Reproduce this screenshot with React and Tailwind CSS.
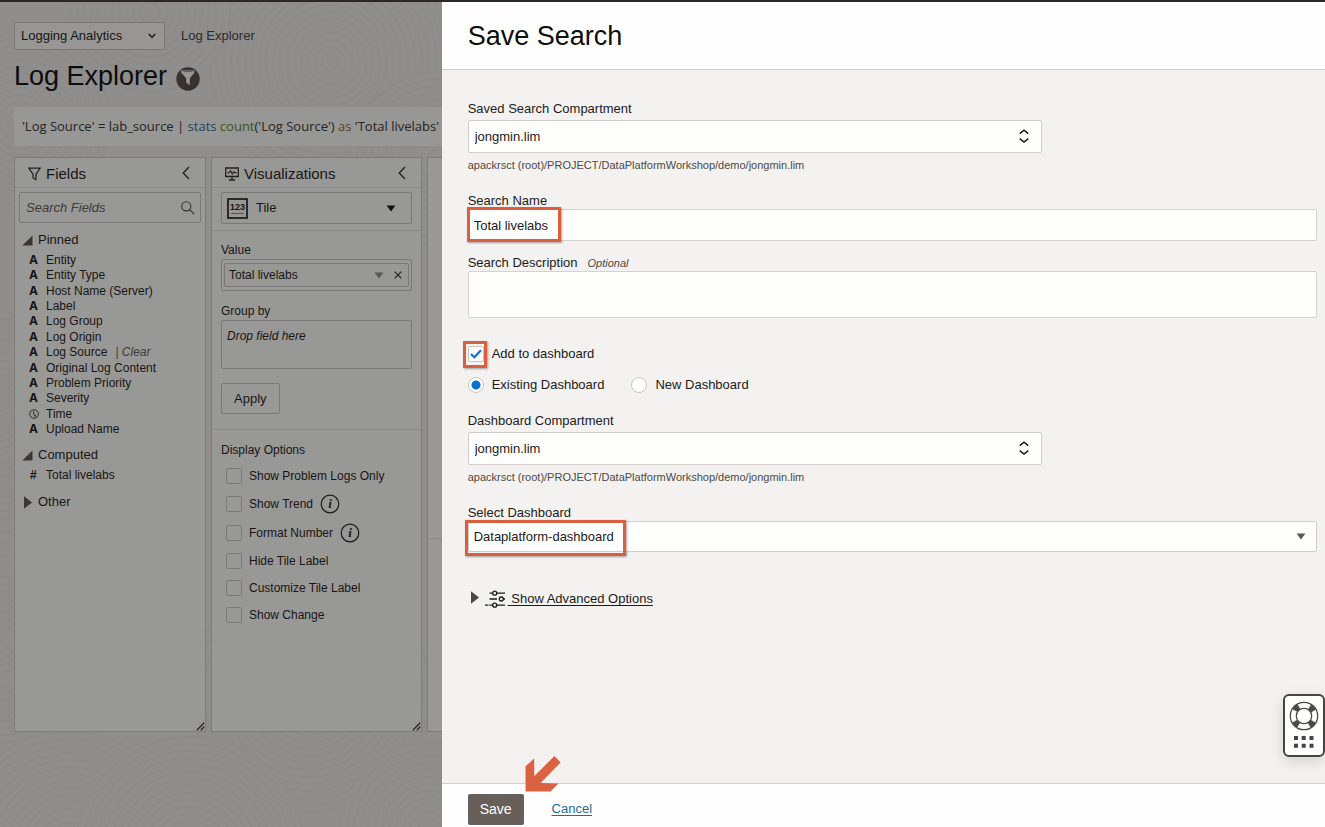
import React from 'react';

const PINNED = [
  'Entity',
  'Entity Type',
  'Host Name (Server)',
  'Label',
  'Log Group',
  'Log Origin',
  'Log Source',
  'Original Log Content',
  'Problem Priority',
  'Severity',
  'Time',
  'Upload Name',
];

const DISPLAY_OPTIONS = [
  { label: 'Show Problem Logs Only' },
  { label: 'Show Trend', info: true },
  { label: 'Format Number', info: true },
  { label: 'Hide Tile Label' },
  { label: 'Customize Tile Label' },
  { label: 'Show Change' },
];

const COMPARTMENT_PATH = 'apackrsct (root)/PROJECT/DataPlatformWorkshop/demo/jongmin.lim';

const RIPPLES = [
  [20, 120, 90], [330, 60, 120], [150, 10, 80], [440, 160, 90],
  [0, 420, 110], [0, 640, 100], [310, 690, 120], [70, 850, 120],
  [430, 830, 90], [190, 850, 115],
];

function Ripples() {
  return (
    <svg className="absolute inset-0 h-full w-full" aria-hidden="true">
      {RIPPLES.map(([cx, cy, max], i) => (
        <g key={i} fill="#8f8e8d" stroke="#8c8b8b" strokeWidth="2">
          {Array.from({ length: Math.floor(max / 7) }, (_, k) => (
            <circle key={k} cx={cx} cy={cy} r={max - k * 7} />
          ))}
        </g>
      ))}
    </svg>
  );
}

function FunnelBadge() {
  return (
    <svg width="24" height="24" viewBox="0 0 24 24" aria-hidden="true">
      <circle cx="12" cy="12" r="11.7" fill="#38322f" />
      <path d="M5.2 3.5h13.2v2.2l-4.6 5.6v6.9l-3.6-2.6v-4.3L5.2 5.700z" fill="#979695" />
      <path d="M7.300 4.600h9.200" stroke="#5c5856" strokeWidth="1" />
    </svg>
  );
}

function FunnelIcon() {
  return (
    <svg width="13" height="14" viewBox="0 0 13 14" fill="none" stroke="#262320" strokeWidth="1.3" aria-hidden="true">
      <path d="M.9 1.200h11.200L7.900 7.400v5.300L5.100 11V7.400z" />
    </svg>
  );
}

function MonitorIcon() {
  return (
    <svg width="14" height="14" viewBox="0 0 14 14" fill="none" stroke="#262320" strokeWidth="1.3" aria-hidden="true">
      <path d="M.7 1h12.600v8.500H.7zM7 9.500v3.300M3.800 13h6.400" />
      <path d="M2.500 5.600h1.700L5.600 3.700l1.700 3.500 1.500-2.600.8 1h1.900" strokeWidth="1.1" />
    </svg>
  );
}

function ChevronLeft() {
  return (
    <svg width="8" height="14" viewBox="0 0 8 14" fill="none" stroke="#201d1b" strokeWidth="1.3" aria-hidden="true">
      <path d="M7 1L1.200 7 7 13" />
    </svg>
  );
}

function TileIcon() {
  return (
    <svg width="21" height="21" viewBox="0 0 21 21" aria-hidden="true">
      <rect x="1" y="1" width="19" height="19" fill="none" stroke="#11100f" strokeWidth="1.600" />
      <text x="10.500" y="12" textAnchor="middle" fontSize="9" fontWeight="700" fill="#171514" fontFamily="Liberation Sans, sans-serif">123</text>
      <path d="M4 15.500h13" stroke="#5b5856" strokeWidth="1.200" />
    </svg>
  );
}

function InfoIcon() {
  return (
    <svg width="20" height="20" viewBox="0 0 20 20" aria-hidden="true">
      <circle cx="10" cy="10" r="8.800" fill="none" stroke="#1d1a18" strokeWidth="1.200" />
      <text x="10" y="14" textAnchor="middle" fontSize="13" fontStyle="italic" fontWeight="700" fill="#1d1a18" fontFamily="Liberation Serif, serif">i</text>
    </svg>
  );
}

function Grip() {
  return (
    <svg width="9" height="9" viewBox="0 0 9 9" className="absolute right-0 bottom-0" stroke="#262320" strokeWidth="1.300" aria-hidden="true">
      <path d="M.8 8.200L8.200.8M4.800 8.200l3.400-3.400" />
    </svg>
  );
}

function ExpandedMark() {
  return (
    <svg width="11" height="11" viewBox="0 0 11 11" fill="#3c3734" aria-hidden="true">
      <path d="M10.500.5v10H.3z" />
    </svg>
  );
}

function CollapsedMark({ fill }) {
  return (
    <svg width="8" height="13" viewBox="0 0 8 13" fill={fill} aria-hidden="true">
      <path d="M0 .3L8 6.500 0 12.700z" />
    </svg>
  );
}

function DownMark({ fill }) {
  return (
    <svg width="10" height="7" viewBox="0 0 10 7" fill={fill} aria-hidden="true">
      <path d="M.6.5h8.800L5 6.500z" />
    </svg>
  );
}

function ClockIcon() {
  return (
    <svg width="10" height="10" viewBox="0 0 10 10" fill="none" stroke="#262320" strokeWidth="0.900" aria-hidden="true">
      <circle cx="5" cy="5" r="4.300" />
      <path d="M4.600 2v3.300L6.700 7.600M6.200 5.500v2.300" />
    </svg>
  );
}

function Panel({ className, children }) {
  return (
    <section className={`relative flex shrink-0 flex-col border border-[#7e7c7a] bg-[#989896] ${className}`}>
      {children}
    </section>
  );
}

function PanelHeader({ icon, title }) {
  return (
    <div className="flex h-[30px] items-center border-b border-[#8b8988] pr-[15px] pl-[13px]">
      <span className="pt-[3px]">{icon}</span>
      <h2 className="ml-[5px] flex-1 pt-[3px] text-[15px] leading-5">{title}</h2>
      <button type="button" aria-label={`Collapse ${title}`}>
        <ChevronLeft />
      </button>
    </div>
  );
}

function FieldsPanel() {
  return (
    <Panel className="w-48">
      <PanelHeader icon={<FunnelIcon />} title="Fields" />
      <div className="px-1 pt-1">
        <div className="flex h-[31px] items-center rounded-xs border border-[#7b7977] pr-[5px] pl-[6px]">
          <input
            type="search"
            aria-label="Search Fields"
            placeholder="Search Fields"
            className="min-w-0 flex-1 bg-transparent text-[13px] italic outline-none placeholder:text-[#3d3a37]"
          />
          <svg width="14" height="14" viewBox="0 0 14 14" fill="none" stroke="#33302e" strokeWidth="1.100" aria-hidden="true">
            <circle cx="5.300" cy="5.300" r="4.600" />
            <path d="M8.700 8.700l4.700 4.700" />
          </svg>
        </div>
      </div>
      <h3 className="mt-2 ml-[7px] flex h-[18px] items-center gap-[5px] text-[13px]">
        <ExpandedMark />
        Pinned
      </h3>
      <ul className="mt-[3px] ml-[14px] grid h-[185px] auto-rows-fr text-[12px]">
        {PINNED.map((name) => (
          <li key={name} className="flex items-center">
            <span className="flex w-[17px]">
              {name === 'Time' ? <ClockIcon /> : <span className="font-['Inter',sans-serif] font-bold">A</span>}
            </span>
            {name}
            {name === 'Log Source' && <span className="ml-2 text-[#3f3c39]">| <i>Clear</i></span>}
          </li>
        ))}
      </ul>
      <h3 className="mt-[9px] ml-[7px] flex h-[18px] items-center gap-[5px] text-[13px]">
        <ExpandedMark />
        Computed
      </h3>
      <div className="mt-[3px] ml-[15px] flex h-4 items-center text-[12px]">
        <span className="w-4 font-bold">#</span>
        Total livelabs
      </div>
      <h3 className="mt-[10px] ml-[9px] flex h-[18px] items-center gap-[6px] text-[13px]">
        <CollapsedMark fill="#3c3734" />
        Other
      </h3>
      <Grip />
    </Panel>
  );
}

function VisualizationsPanel() {
  return (
    <Panel className="w-[211px]">
      <PanelHeader icon={<MonitorIcon />} title="Visualizations" />
      <div className="border-b border-[#8b8988] px-[9px] pt-1 pb-[6px]">
        <button type="button" className="flex h-8 w-full items-center rounded-xs border border-[#7b7977] pr-[15px] pl-[5px] text-[13px]">
          <TileIcon />
          <span className="ml-2 flex-1 text-left">Tile</span>
          <DownMark fill="#11100f" />
        </button>
      </div>
      <div className="border-b border-[#8b8988] px-[9px] pt-[11px] pb-[15px] text-[12px]">
        <div className="leading-4">Value</div>
        <div className="mt-px rounded-xs border border-[#7b7977] px-[2px] py-[3px]">
          <div className="flex h-6 items-center rounded-xs border border-[#7b7977] pr-[6px] pl-1">
            <span className="flex-1">Total livelabs</span>
            <DownMark fill="#5a5755" />
            <button type="button" aria-label="Remove" className="ml-[10px]">
              <svg width="8" height="8" viewBox="0 0 8 8" stroke="#262320" strokeWidth="1.200" aria-hidden="true">
                <path d="M.7.7l6.600 6.600M7.300.7L.7 7.300" />
              </svg>
            </button>
          </div>
        </div>
        <div className="mt-3 leading-4">Group by</div>
        <div className="mt-px h-[49px] rounded-xs border border-[#7b7977] px-[5px] pt-[7px] leading-4 italic">Drop field here</div>
        <button type="button" className="mt-[14px] block h-[31px] rounded-xs border border-[#7b7977] px-3 text-[13px]">Apply</button>
      </div>
      <fieldset className="px-[9px] pt-3 text-[12px]">
        <legend className="float-left w-full leading-4">Display Options</legend>
        <div className="clear-both flex flex-col pt-1">
          {DISPLAY_OPTIONS.map(({ label, info }) => (
            <div key={label} className={info ? 'flex h-[29px] items-center' : 'flex h-[27px] items-center'}>
              <label className="flex items-center">
                <input type="checkbox" className="ml-[5px] h-4 w-4 appearance-none rounded-xs border border-[#7b7977]" />
                <span className="ml-[7px]">{label}</span>
              </label>
              {info && (
                <button type="button" aria-label={`About ${label}`} className="ml-[7px]">
                  <InfoIcon />
                </button>
              )}
            </div>
          ))}
        </div>
      </fieldset>
      <Grip />
    </Panel>
  );
}

function Explorer() {
  return (
    <main className="relative w-1/3 shrink-0 overflow-hidden bg-[#8f8e8d] text-[#181614]">
      <Ripples />
      <div className="relative flex flex-col pt-5 pl-[14px]">
        <div className="flex items-center">
          <div className="relative">
            <select aria-label="Service" className="h-7 w-[151px] appearance-none rounded-xs border border-[#7b7977] bg-[#979695] pl-[6px] text-[13px]">
              <option>Logging Analytics</option>
            </select>
            <svg width="8" height="6" viewBox="0 0 8 6" className="pointer-events-none absolute top-[11px] right-[9px]" fill="none" stroke="#181614" strokeWidth="1.400" aria-hidden="true">
              <path d="M.8 1L4 4.300 7.200 1" />
            </svg>
          </div>
          <a href="#log-explorer" className="ml-4 text-[13px] text-[#2e2b29]">Log Explorer</a>
        </div>
        <h1 className="mt-2 flex h-9 items-center gap-[9px] text-[27px] leading-9 text-[#0d0c0b]">
          Log Explorer
          <span className="pt-[5px]"><FunnelBadge /></span>
        </h1>
        <div className="mt-[13px] flex h-[39px] items-center bg-[#979796] pl-2 font-['Open_Sans',sans-serif] text-[13px] whitespace-pre text-[#262321]">
          <span>
            {"'Log Source' = lab_source | "}
            <span className="text-[#1f4459]">stats</span> <span className="text-[#3d5326]">count</span>
            {"('Log Source') "}
            <span className="text-[#5d4326]">as</span>
            {" 'Total livelabs'"}
          </span>
        </div>
        <div className="mt-[11px] flex h-[575px] gap-[5px]">
          <FieldsPanel />
          <VisualizationsPanel />
          <Panel className="w-[600px]">
            <div className="h-[381px] border-b border-[#8b8988]" />
          </Panel>
        </div>
      </div>
    </main>
  );
}

function Highlight({ className }) {
  return <span className={`pointer-events-none absolute border-3 border-[#d95f3f] shadow-[1px_1px_2px_#00000059] ${className}`} />;
}

function CompartmentField({ id, label }) {
  return (
    <div>
      <label htmlFor={id} className="block leading-4">{label}</label>
      <div className="relative mt-[3px] w-[574px] max-w-full">
        <select id={id} className="h-[33px] w-full appearance-none rounded-xs border border-[#d0cdcb] bg-[#fefefd] px-[6px] pt-px">
          <option>jongmin.lim</option>
        </select>
        <svg width="10" height="14" viewBox="0 0 10 14" className="pointer-events-none absolute top-[9px] right-[13px]" fill="none" stroke="#161513" strokeWidth="1.400" aria-hidden="true">
          <path d="M.7 4.600L5 1.200l4.300 3.400M.7 9.600L5 13l4.300-3.400" />
        </svg>
      </div>
      <p className="mt-1 text-[11px] leading-4 text-[#4c4946]">{COMPARTMENT_PATH}</p>
    </div>
  );
}

function HelpWidget() {
  return (
    <button
      type="button"
      aria-label="Help"
      className="fixed top-[694px] right-0 flex h-[63px] w-[42px] flex-col items-center rounded-md border-2 border-[#454543] bg-[#fefefe] pt-[5px] shadow-[0_4px_14px_#00000022]"
    >
      <svg width="30" height="50" viewBox="0 0 30 50" aria-hidden="true">
        <circle cx="15" cy="15" r="10.700" fill="none" stroke="#4b4b49" strokeWidth="6" strokeDasharray="5.600 11.208" strokeDashoffset="-5.600" />
        <circle cx="15" cy="15" r="13.700" fill="none" stroke="#4b4b49" strokeWidth="1.300" />
        <circle cx="15" cy="15" r="7.700" fill="none" stroke="#4b4b49" strokeWidth="1.300" />
        <g fill="#454543">
          <path d="M5 35h4v4H5zM12.700 35h4v4h-4zM20.500 35h4v4h-4zM5 42.700h4v4H5zM12.700 42.700h4v4h-4zM20.500 42.700h4v4h-4z" />
        </g>
      </svg>
    </button>
  );
}

function SaveSearchDrawer() {
  return (
    <aside className="flex min-w-0 flex-1 flex-col bg-[#f3f2f1] text-[13px] text-[#1d1b19]">
      <header className="flex h-[68px] shrink-0 items-center border-b border-[#d0cecc] bg-[#fefefe] px-[26px]">
        <h1 className="text-[27px] leading-9 text-[#0e0d0c]">Save Search</h1>
      </header>
      <form className="flex-1 pt-[31px] pr-2 pl-[26px]">
        <CompartmentField id="search-compartment" label="Saved Search Compartment" />
        <label htmlFor="search-name" className="mt-5 block leading-4">Search Name</label>
        <div className="relative">
          <input
            id="search-name"
            type="text"
            defaultValue="Total livelabs"
            className="block h-8 w-full rounded-xs border border-[#d5d3d1] bg-[#fefefd] px-[5px]"
          />
          <Highlight className="-top-[2px] -left-px h-[35px] w-[94px]" />
        </div>
        <label htmlFor="search-description" className="mt-[14px] flex items-center gap-[10px] leading-4">
          Search Description
          <i className="text-[11px] text-[#4c4946]">Optional</i>
        </label>
        <textarea id="search-description" className="block h-[47px] w-full resize-none rounded-xs border border-[#d5d3d1] bg-[#fefefd] px-[5px]" />
        <div className="mt-[26px] flex h-5 items-center">
          <label className="flex items-center gap-2">
            <span className="relative flex h-4 w-4">
              <input type="checkbox" defaultChecked className="h-4 w-4 appearance-none rounded-xs border border-[#c8c6c4] bg-white" />
              <svg width="12" height="10" viewBox="0 0 12 10" className="pointer-events-none absolute top-[3px] left-[2px]" fill="none" stroke="#0572ce" strokeWidth="2.200" aria-hidden="true">
                <path d="M1 5l3.400 3.300L11 1.200" />
              </svg>
              <Highlight className="-top-[5px] -left-[5px] h-[27px] w-6" />
            </span>
            Add to dashboard
          </label>
        </div>
        <div className="mt-[11px] flex h-5 items-center gap-[27px]">
          <label className="flex items-center gap-2">
            <input
              type="radio"
              name="dashboard"
              defaultChecked
              className="h-4 w-4 appearance-none rounded-full border border-[#c8c6c4] bg-[radial-gradient(circle,#0572ce_4px,#ffffff_5px)]"
            />
            Existing Dashboard
          </label>
          <label className="flex items-center gap-2">
            <input type="radio" name="dashboard" className="h-4 w-4 appearance-none rounded-full border border-[#c8c6c4] bg-white" />
            New Dashboard
          </label>
        </div>
        <div className="pt-[18px]">
          <CompartmentField id="dashboard-compartment" label="Dashboard Compartment" />
        </div>
        <label htmlFor="dashboard-select" className="mt-5 block leading-4">Select Dashboard</label>
        <div className="relative">
          <select id="dashboard-select" className="block h-[31px] w-full appearance-none rounded-xs border border-[#d0cdcb] bg-[#fefefd] px-[5px] pt-px">
            <option>Dataplatform-dashboard</option>
          </select>
          <span className="pointer-events-none absolute top-3 right-[11px]"><DownMark fill="#5a5755" /></span>
          <Highlight className="-top-[1px] -left-[3px] h-9 w-[161px]" />
        </div>
        <div className="mt-[37px] flex h-5 items-center pl-[3px]">
          <span className="pb-1"><CollapsedMark fill="#4b4744" /></span>
          <a href="#advanced" className="ml-[6px] flex items-center">
            <svg width="22" height="18" viewBox="0 0 22 18" fill="none" stroke="#1d1b19" strokeWidth="1.300" aria-hidden="true">
              <path d="M4.500 3.200h3M12 3.200h8M4.500 9h7.500M18.500 9H20M0 15.200h3.500M4.500 15.200h3M12 15.200h8" />
              <circle cx="9.700" cy="3.200" r="2" />
              <circle cx="16.300" cy="9" r="2" />
              <circle cx="9.700" cy="15.200" r="2" />
            </svg>
            <span className="ml-px whitespace-pre underline underline-offset-2"> Show Advanced Options</span>
          </a>
        </div>
      </form>
      <footer className="relative flex h-11 shrink-0 items-start gap-7 border-t border-[#d0cecc] bg-[#fefefe] px-[26px] pt-[10px]">
        <button type="button" className="h-[31px] rounded-xs bg-[#665f5a] px-3 text-[14px] text-white">Save</button>
        <a href="#cancel" className="pt-[5px] leading-5 text-[#1f6d94] underline underline-offset-2">Cancel</a>
        <svg width="36" height="36" viewBox="0 0 36 36" className="absolute -top-[28px] left-[83px]" fill="#da6142" aria-hidden="true">
          <path d="M.5 10.300L9.200 2.500v17.700L29.400 0l6.200 6.400L15.500 26.900l18 .5-8 8H.5z" />
        </svg>
      </footer>
    </aside>
  );
}

export default function App() {
  return (
    <div className="flex min-h-screen flex-col font-['Liberation_Sans',Arial,sans-serif]">
      <div className="h-[2px] shrink-0 bg-[#2c2725]" />
      <div className="flex flex-1">
        <Explorer />
        <SaveSearchDrawer />
      </div>
      <HelpWidget />
    </div>
  );
}
